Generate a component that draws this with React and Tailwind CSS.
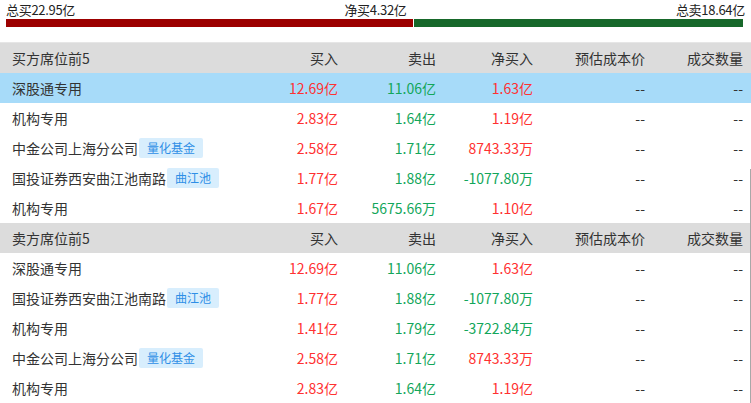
import React from "react";

const buyRows = [
  { name: "深股通专用", buy: "12.69亿", sell: "11.06亿", net: "1.63亿", netUp: true, active: true },
  { name: "机构专用", buy: "2.83亿", sell: "1.64亿", net: "1.19亿", netUp: true },
  { name: "中金公司上海分公司", tag: "量化基金", buy: "2.58亿", sell: "1.71亿", net: "8743.33万", netUp: true },
  { name: "国投证券西安曲江池南路", tag: "曲江池", buy: "1.77亿", sell: "1.88亿", net: "-1077.80万", netUp: false },
  { name: "机构专用", buy: "1.67亿", sell: "5675.66万", net: "1.10亿", netUp: true },
];

const sellRows = [
  { name: "深股通专用", buy: "12.69亿", sell: "11.06亿", net: "1.63亿", netUp: true },
  { name: "国投证券西安曲江池南路", tag: "曲江池", buy: "1.77亿", sell: "1.88亿", net: "-1077.80万", netUp: false },
  { name: "机构专用", buy: "1.41亿", sell: "1.79亿", net: "-3722.84万", netUp: false },
  { name: "中金公司上海分公司", tag: "量化基金", buy: "2.58亿", sell: "1.71亿", net: "8743.33万", netUp: true },
  { name: "机构专用", buy: "2.83亿", sell: "1.64亿", net: "1.19亿", netUp: true },
];

const cols = "grid grid-cols-[1fr_100px_98px_97px_112px_98px] items-center h-[30px] pl-3 pr-2 text-[14px]";

function HeadRow({ title }) {
  return (
    <div className={cols + " bg-[#dcdcdc] text-[#333]"}>
      <span>{title}</span>
      <span className="text-right">买入</span>
      <span className="text-right">卖出</span>
      <span className="text-right">净买入</span>
      <span className="text-right">预估成本价</span>
      <span className="text-right">成交数量</span>
    </div>
  );
}

function Row({ row }) {
  return (
    <div className={cols + (row.active ? " bg-[#a7dbf9]" : " bg-white")}>
      <span className="flex items-center text-[#333] whitespace-nowrap">
        {row.name}
        {row.tag && (
          <span className="ml-[1px] h-5 px-2 rounded-[2px] bg-[#d8eefd] text-[#2f8fe6] text-[12px] leading-5">
            {row.tag}
          </span>
        )}
      </span>
      <span className="text-right text-[#ff3131]">{row.buy}</span>
      <span className="text-right text-[#12a65a]">{row.sell}</span>
      <span className={"text-right " + (row.netUp ? "text-[#ff3131]" : "text-[#12a65a]")}>{row.net}</span>
      <span className="text-right text-[#333]">--</span>
      <span className="text-right text-[#333]">--</span>
    </div>
  );
}

export default function App() {
  const totalBuy = 22.95;
  const totalSell = 18.64;
  const buyPct = (totalBuy / (totalBuy + totalSell)) * 100;

  return (
    <div
      className="relative w-[751px] h-[403px] overflow-hidden bg-white"
      style={{ fontFamily: '"Noto Sans CJK SC", "Microsoft YaHei", sans-serif' }}
    >
      <div className="h-[43px] px-[6px] pt-[2px] border-b border-[#e6e6e6]">
        <div className="flex justify-between text-[13px] leading-[15px] text-[#222] tracking-[-0.3px]">
          <span>总买22.95亿</span>
          <span>净买4.32亿</span>
          <span>总卖18.64亿</span>
        </div>
        <div className="flex mt-[2px] h-2 pr-[2px]">
          <div className="bg-[#9c0000]" style={{ width: buyPct + "%" }} />
          <div className="flex-1 ml-[1px] bg-[#17682a]" />
        </div>
      </div>

      <HeadRow title="买方席位前5" />
      {buyRows.map((r, i) => (
        <Row key={"b" + i} row={r} />
      ))}
      <HeadRow title="卖方席位前5" />
      {sellRows.map((r, i) => (
        <Row key={"s" + i} row={r} />
      ))}

      <div className="absolute right-0 top-[169px] bottom-0 w-px bg-[#a8a8a8]" />
    </div>
  );
}
